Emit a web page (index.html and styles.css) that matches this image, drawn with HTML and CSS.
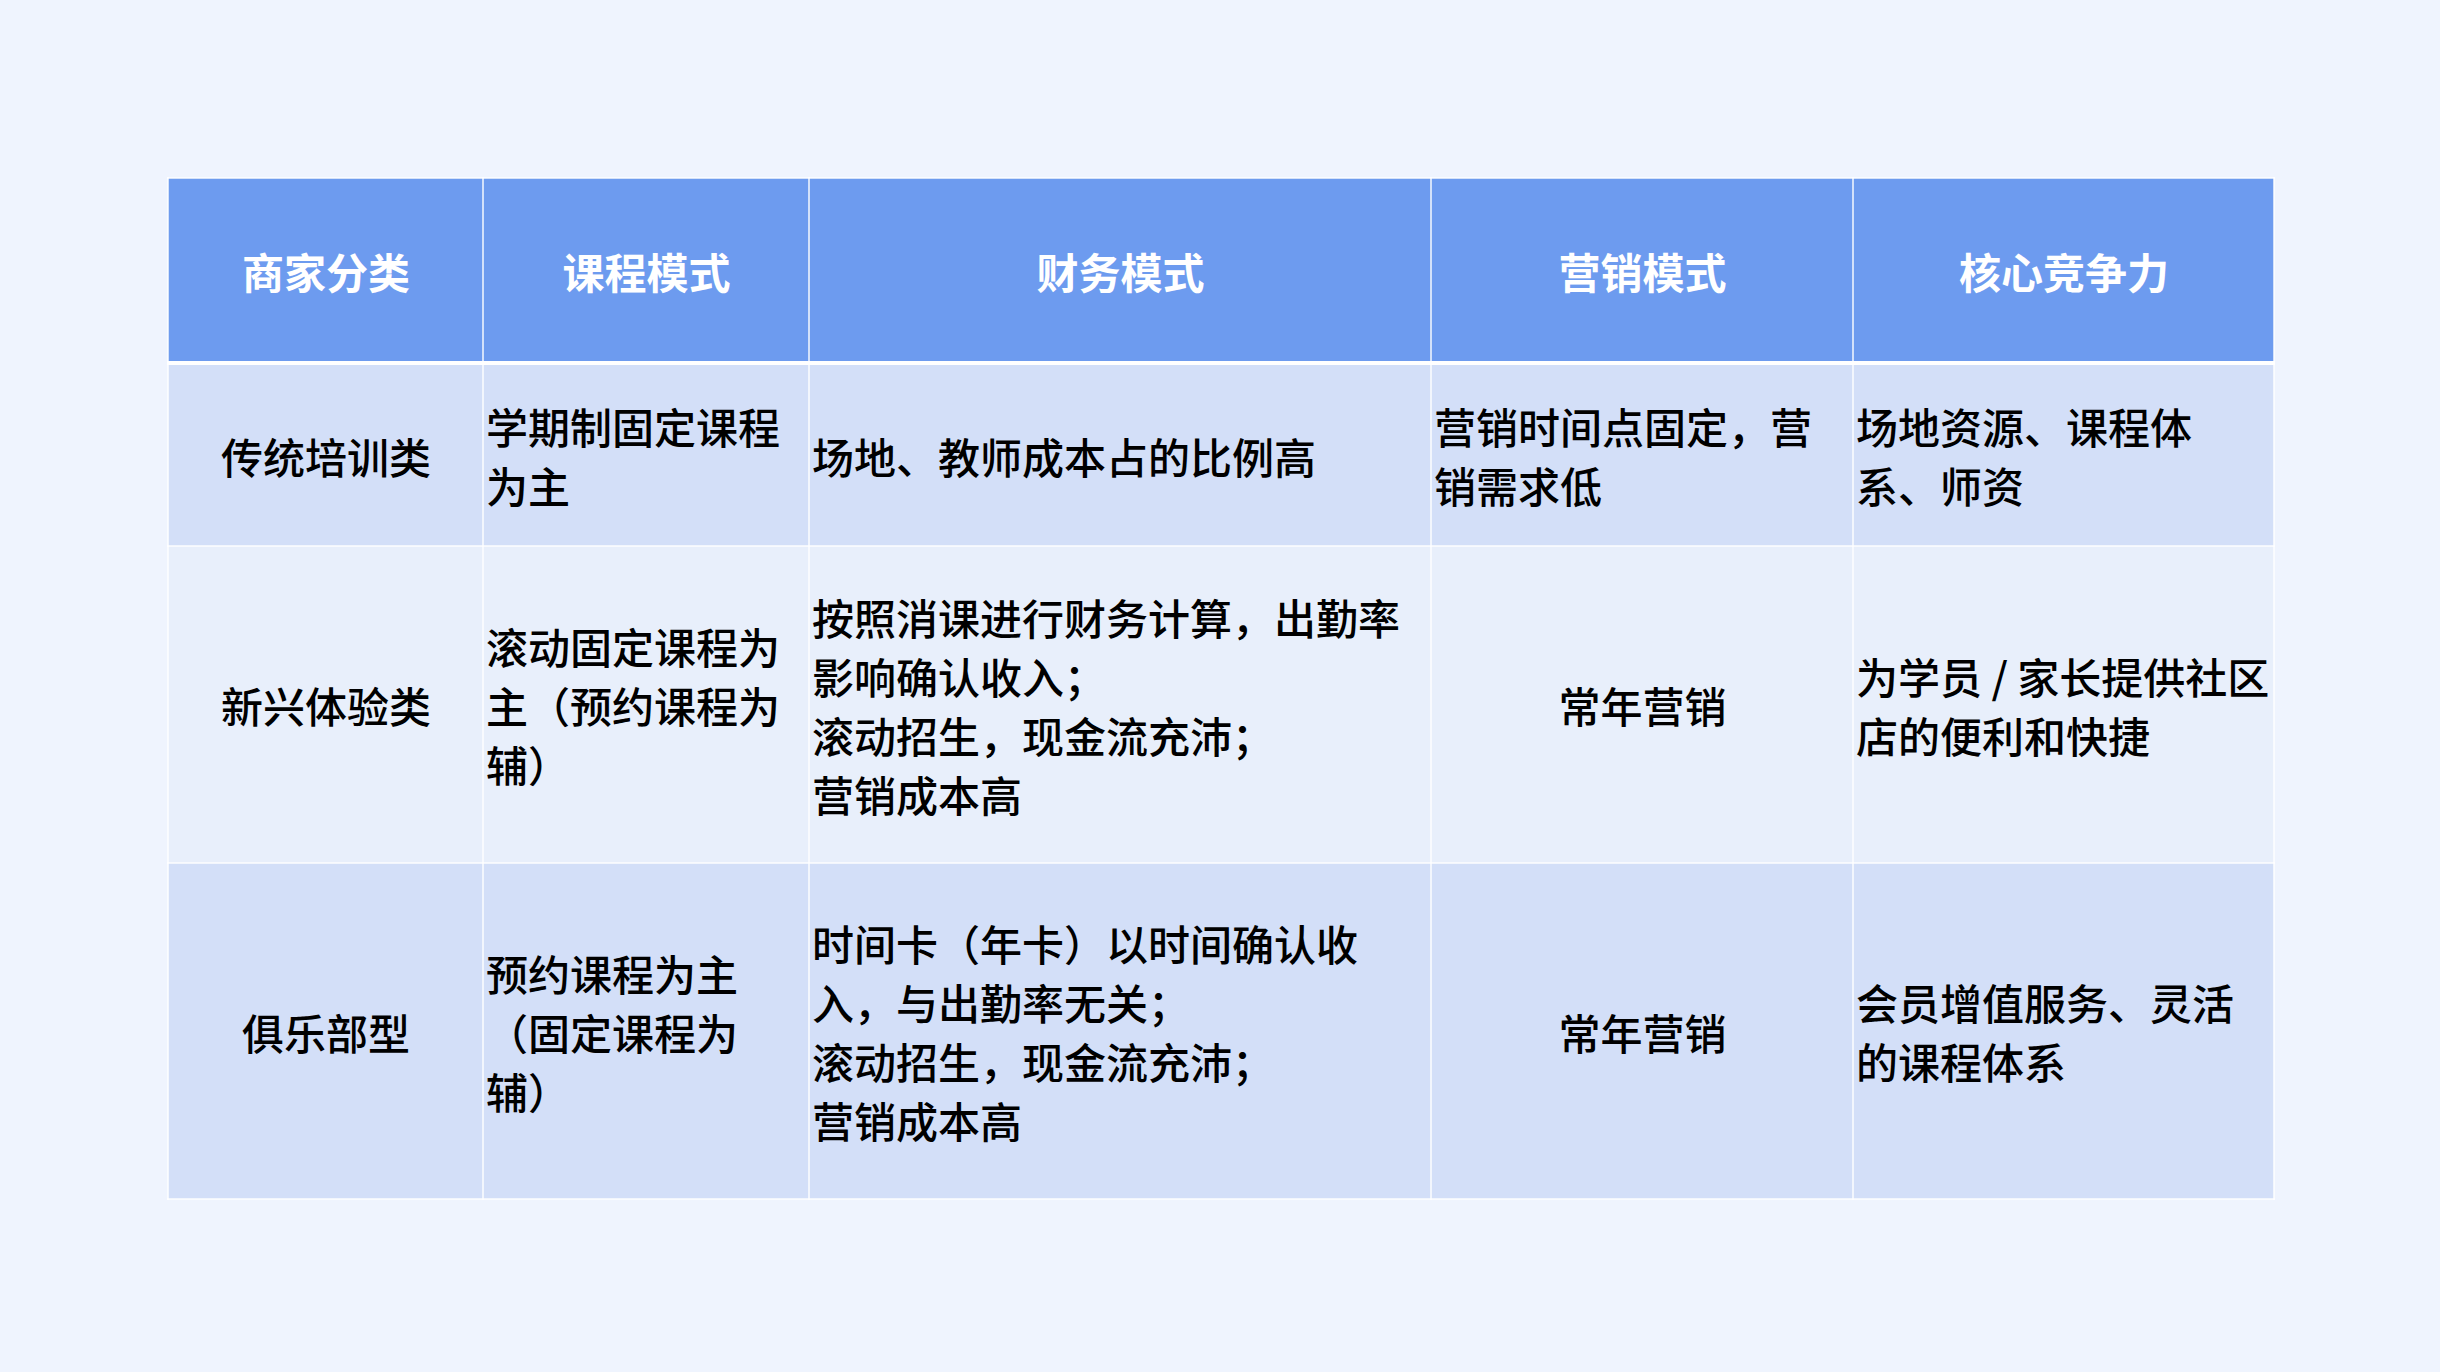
FILE: index.html
```html
<!DOCTYPE html>
<html lang="zh-CN">
<head>
<meta charset="utf-8">
<title>商家分类</title>
<link rel="stylesheet" href="styles.css">
</head>
<body>
<main class="page">
  <table class="grid">
    <colgroup>
      <col class="c1"><col class="c2"><col class="c3"><col class="c4"><col class="c5">
    </colgroup>
    <thead>
      <tr class="head">
        <th>商家分类</th>
        <th>课程模式</th>
        <th>财务模式</th>
        <th>营销模式</th>
        <th>核心竞争力</th>
      </tr>
    </thead>
    <tbody>
      <tr class="r1">
        <td class="center">传统培训类</td>
        <td>学期制固定课程为主</td>
        <td>场地、教师成本占的比例高</td>
        <td>营销时间点固定，营销需求低</td>
        <td>场地资源、课程体系、师资</td>
      </tr>
      <tr class="r2">
        <td class="center">新兴体验类</td>
        <td>滚动固定课程为主（预约课程为辅）</td>
        <td>按照消课进行财务计算，出勤率影响确认收入；<br>滚动招生，现金流充沛；<br>营销成本高</td>
        <td class="center">常年营销</td>
        <td>为学员 / 家长提供社区店的便利和快捷</td>
      </tr>
      <tr class="r3">
        <td class="center">俱乐部型</td>
        <td>预约课程为主（固定课程为辅）</td>
        <td>时间卡（年卡）以时间确认收入，与出勤率无关；<br>滚动招生，现金流充沛；<br>营销成本高</td>
        <td class="center">常年营销</td>
        <td>会员增值服务、灵活的课程体系</td>
      </tr>
    </tbody>
  </table>
</main>
</body>
</html>
```

FILE: styles.css
```css
html, body {
  margin: 0;
  padding: 0;
}
body {
  background: #eff4fe;
  font-family: "Noto Sans CJK SC", "Noto Sans", sans-serif;
  color: #000;
}
.page {
  width: 2440px;
  height: 1372px;
  padding: 177px 0 0 167px;
  box-sizing: border-box;
}
.grid {
  border-collapse: collapse;
  table-layout: fixed;
  width: 2106px;
  font-size: 42px;
  line-height: 59px;
  text-spacing-trim: space-all;
}
.c1 { width: 315px; }
.c2 { width: 326px; }
.c3 { width: 622px; }
.c4 { width: 422px; }
.c5 { width: 421px; }
.grid th,
.grid td {
  border: 2px solid rgba(255, 255, 255, 0.7);
  padding: 0 1px 0 2px;
  vertical-align: middle;
  text-align: left;
  font-weight: 500;
}
.grid th {
  background: #6d9bef;
  color: #fff;
  font-weight: 700;
  text-align: center;
  height: 182px;
  border-bottom-width: 4px;
  border-bottom-color: #fff;
}
.grid td.center {
  text-align: center;
}
.r1 td { background: #d3dff8; height: 180px; }
.r2 td { background: #e8effb; height: 315px; }
.r3 td { background: #d3dff8; height: 334px; }
```
